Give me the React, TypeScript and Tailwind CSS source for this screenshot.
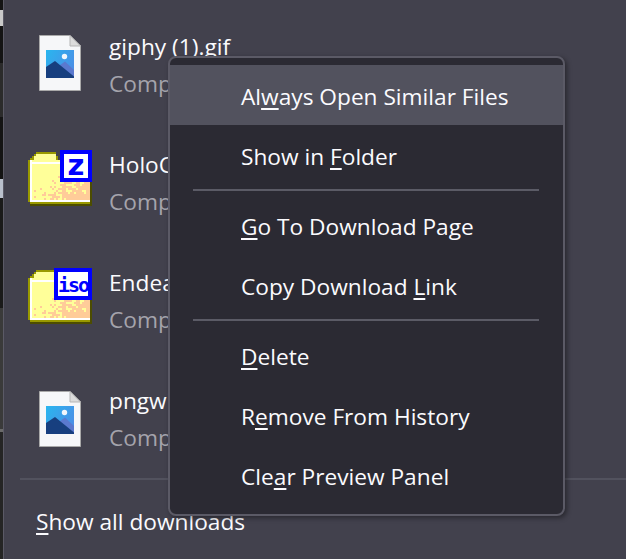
import React from "react";

function FileIcon({ id }: { id: string }) {
  return (
    <svg width="42" height="56" viewBox="0 0 42 56" className="block">
      <defs>
        <linearGradient id={id} x1="0" y1="0" x2="1" y2="0.6">
          <stop offset="0" stopColor="#29b6ef" />
          <stop offset="1" stopColor="#4b8fe6" />
        </linearGradient>
      </defs>
      <path d="M0.5 0.5H31L41.5 11V55.5H0.5Z" fill="#f6f7f9" stroke="#a9a9a9" />
      <path d="M31 0.5V11H41.5Z" fill="#dcdcdc" stroke="#b5b5b5" />
      <rect x="7" y="15" width="28" height="28" fill={`url(#${id})`} />
      <circle cx="25.5" cy="21.5" r="2.7" fill="#f2f7fc" />
      <path d="M17 33L26 26.5L35 35V43H17Z" fill="#5a79cf" />
      <path d="M7 32L16 26L35 41.5V43H7Z" fill="#173f7f" />
    </svg>
  );
}

function FolderIcon({ label, wide }: { label: string; wide?: boolean }) {
  const cells: React.ReactNode[] = [];
  for (let y = 7; y < 25; y++) {
    for (let x = 2; x < 31; x++) {
      const t = (x / 31 + (y - 7) / 18) / 2;
      const h = ((x * 7 + y * 13) ^ (x * y * 3)) % 10;
      if (t > 0.9 - h * 0.055 && t > 0.3) {
        cells.push(<rect key={`${x}-${y}`} x={x} y={y} width="1" height="1" fill="#ffcc99" />);
      }
    }
  }
  return (
    <svg width="64" height="56" viewBox="0 0 32 28" className="block" shapeRendering="crispEdges">
      <path d="M4 1H14V3H15V5H31V27H1V26H0V5H1V4H2V3H3V2H4Z" fill="#999900" />
      <rect x="1" y="27" width="31" height="1" fill="#4d4d00" />
      <rect x="4" y="2" width="10" height="3" fill="#ffff99" />
      <rect x="3" y="3" width="2" height="2" fill="#ffff99" />
      <rect x="2" y="5" width="29" height="20" fill="#ffff99" />
      {cells}
      <rect x="1" y="5" width="1" height="21" fill="#ffffff" />
      <rect x="1" y="6" width="15" height="1" fill="#ffffff" />
      <rect x="1" y="25" width="30" height="1" fill="#ffffff" />
      <rect x="1" y="26" width="30" height="1" fill="#999900" />
      <rect x="31" y="5" width="1" height="23" fill="#4d4d00" />
      {wide ? (
        <g>
          <rect x="13" y="0" width="19" height="16" fill="#0000ff" />
          <rect x="15" y="2" width="15" height="12" fill="#ffffff" />
          <text x="22.5" y="12.2" textAnchor="middle" fontFamily="'DejaVu Sans Mono', monospace" fontWeight="700" fontSize="10" letterSpacing="-1" fill="#0000ff">
            {label}
          </text>
        </g>
      ) : (
        <g>
          <rect x="16" y="0" width="16" height="16" fill="#0000ff" />
          <rect x="18" y="2" width="12" height="12" fill="#ffffff" />
          <text x="24" y="12.4" textAnchor="middle" fontFamily="'DejaVu Sans', sans-serif" fontWeight="700" fontSize="14.5" fill="#0000ff">
            {label}
          </text>
        </g>
      )}
    </svg>
  );
}

function DownloadRow({ icon, name, iconClass }: { icon: React.ReactNode; name: string; iconClass: string }) {
  return (
    <div className="flex h-[118px] items-center pl-[24px]">
      <div className={`flex w-[64px] shrink-0 justify-center ${iconClass}`}>{icon}</div>
      <div className="ml-[17px] flex flex-col whitespace-nowrap pt-[2px]">
        <div className="h-[37px] text-[#fbfbfe]">{name}</div>
        <div className="text-[#a5a4ac]">Completed</div>
      </div>
    </div>
  );
}

const U = ({ children }: { children: React.ReactNode }) => (
  <span className="underline decoration-2 underline-offset-[3px] [text-decoration-skip-ink:none]">{children}</span>
);

function MenuItem({ children, active }: { children: React.ReactNode; active?: boolean }) {
  return (
    <div className={`flex h-[60px] items-center pl-[71px] pt-[4px] text-[#fbfbfe] ${active ? "bg-[#52525e]" : ""}`}>
      <span>{children}</span>
    </div>
  );
}

const Sep = () => <div className="ml-[23px] mr-[24px] mb-[4px] mt-[4px] h-[2px] bg-[#5b5b66]" />;

export default function App() {
  return (
    <div className="flex h-[559px] w-[626px] overflow-hidden bg-[#42414d] font-['Open_Sans','Noto_Sans',sans-serif] text-[22.7px]">
      <div className="flex w-[3px] shrink-0 flex-col bg-[#141414]">
        <div className="h-[10px]" />
        <div className="h-[16px] bg-[#c9c9c9]" />
        <div className="h-[37px]" />
        <div className="h-[54px] bg-[#2b2b2b]" />
        <div className="h-[54px]" />
        <div className="h-[8px]" />
        <div className="h-[19px] bg-[#b9c0cc]" />
        <div className="h-[110px] bg-[#1a1a1a]" />
        <div className="h-[121px] bg-[#3a3a3a]" />
        <div className="h-[3px] bg-[#6a6a6a]" />
        <div className="flex-1 bg-[#252525]" />
      </div>
      <div className="relative flex flex-1 flex-col border-l border-[#5b5a66] pt-[6px]">
        <DownloadRow icon={<FileIcon id="a" />} name="giphy (1).gif" iconClass="mb-[4px]" />
        <DownloadRow icon={<FolderIcon label="z" />} name="HoloCure.zip" iconClass="mb-[11px]" />
        <DownloadRow icon={<FolderIcon label="iso" wide />} name="EndeavourOS.iso" iconClass="mb-[11px]" />
        <DownloadRow icon={<FileIcon id="b" />} name="pngwing.com.png" iconClass="" />
        <div className="ml-[16px] h-[2px] bg-[#52525e]" />
        <div className="flex flex-1 items-center pl-[32px] pt-[5px] text-[#fbfbfe]">
          <span>
            <U>S</U>how all downloads
          </span>
        </div>

        <div className="absolute left-[164px] top-[56px] w-[397px] rounded-[8px] border-2 border-[#5b5a66] bg-[#2b2a33] pb-[9px] pt-[7px] shadow-[2px_2px_5px_rgba(0,0,0,0.4)]">
          <MenuItem active>
            Al<U>w</U>ays Open Similar Files
          </MenuItem>
          <MenuItem>
            Show in <U>F</U>older
          </MenuItem>
          <Sep />
          <MenuItem>
            <U>G</U>o To Download Page
          </MenuItem>
          <MenuItem>
            Copy Download <U>L</U>ink
          </MenuItem>
          <Sep />
          <MenuItem>
            <U>D</U>elete
          </MenuItem>
          <MenuItem>
            R<U>e</U>move From History
          </MenuItem>
          <MenuItem>
            Cle<U>a</U>r Preview Panel
          </MenuItem>
        </div>
      </div>
    </div>
  );
}
